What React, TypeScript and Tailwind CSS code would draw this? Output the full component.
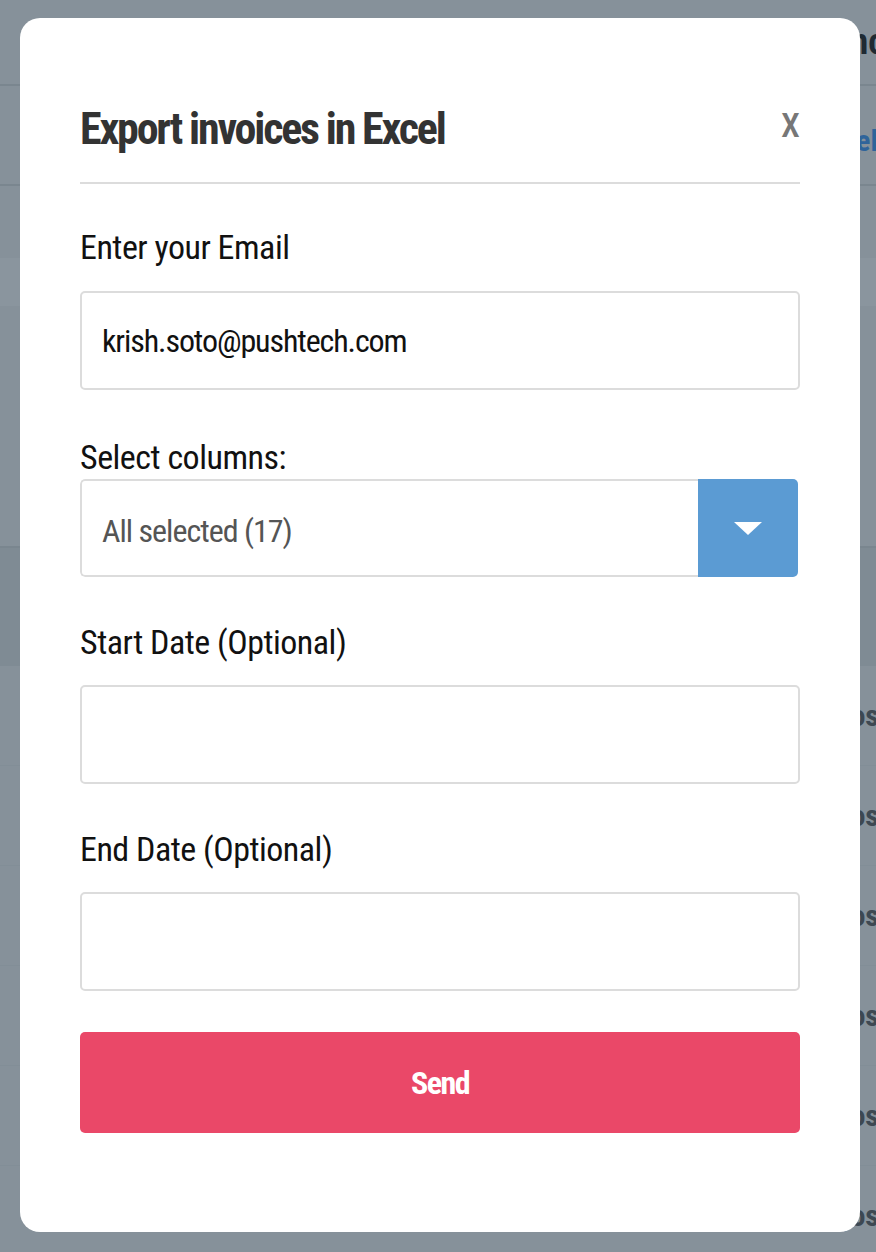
import React from "react";

const Field: React.FC<{ label: string; value?: string }> = ({ label, value }) => {
  return (
    <>
      <label className="mt-[45px] block text-[34px] leading-[40px] tracking-[-0.5px] text-[#111]">
        {label}
      </label>
      <div className="mt-[23px] flex h-[99px] w-[720px] items-center rounded-[5px] border-2 border-[#dcdcdc] px-[20px] text-[32px] text-[#111]">
        {value}
      </div>
    </>
  );
};

const App: React.FC = () => {
  return (
    <div className="relative h-[1252px] w-full overflow-hidden bg-[#86919a] font-['Roboto_Condensed','Liberation_Sans_Narrow','Arial_Narrow',Roboto,sans-serif]">
      {/* page behind the dialog */}
      <div className="flex flex-col">
        <div className="flex h-[86px] items-center justify-end border-b-2 border-[#7a868f]">
          <span className="mr-[-26px] text-[36px] font-bold text-[#1f2a33]">Finance</span>
        </div>
        <div className="flex h-[100px] items-center justify-end border-b-2 border-[#7a868f]">
          <span className="mr-[-2px] mt-[10px] text-[30px] font-bold text-[#2f649a]">Excel</span>
        </div>
        <div className="h-[72px]" />
        <div className="h-[48px] bg-[#8a959e]" />
        <div className="h-[242px] border-b-2 border-[#7a868f]" />
        <div className="h-[118px] bg-[#7f8b94]" />
        {["Pagos", "Pagos", "Pagos", "Pagos", "Pagos", "Pagos"].map((t, i) => (
          <div
            key={i}
            className="flex h-[100px] items-center justify-end border-b border-[#828e97]"
          >
            <span className="mr-[-3px] text-[30px] font-bold text-[#3d4852]">{t}</span>
          </div>
        ))}
      </div>

      {/* dialog */}
      <div className="absolute left-[20px] top-[18px] flex h-[1214px] w-[840px] flex-col rounded-[20px] bg-white px-[60px] pt-[85px]">
        <div className="flex items-start justify-between">
          <h2 className="text-[44px] font-bold leading-[52px] tracking-[-2.2px] text-[#333]">
            Export invoices in Excel
          </h2>
          <button className="mt-[2px] text-[34px] font-medium leading-[40px] text-[#777]">X</button>
        </div>
        <div className="mt-[27px] h-[2px] w-[720px] bg-[#dcdcdc]" />

        <label className="mt-[43px] block text-[34px] leading-[40px] tracking-[-0.5px] text-[#111]">
          Enter your Email
        </label>
        <div className="mt-[24px] flex h-[99px] w-[720px] items-center rounded-[5px] border-2 border-[#dcdcdc] px-[20px] text-[32px] tracking-[-1.1px] text-[#111]">
          krish.soto@pushtech.com
        </div>

        <label className="mt-[47px] block text-[34px] leading-[40px] tracking-[-0.5px] text-[#111]">
          Select columns:
        </label>
        <div className="mt-[2px] flex h-[98px] w-[718px] overflow-hidden rounded-[5px]">
          <div className="flex flex-1 items-center rounded-l-[5px] border-2 border-r-0 border-[#dcdcdc] px-[20px] pt-[6px] text-[32px] tracking-[-1px] text-[#555]">
            All selected (17)
          </div>
          <div className="flex w-[100px] items-center justify-center bg-[#5b9bd3]">
            <svg width="28" height="13" viewBox="0 0 28 13">
              <path d="M0 0 L28 0 L14 13 Z" fill="#fff" />
            </svg>
          </div>
        </div>

        <Field label="Start Date (Optional)" />
        <Field label="End Date (Optional)" />

        <button className="mt-[41px] flex h-[101px] w-[720px] items-center justify-center rounded-[5px] bg-[#ea4868] text-[32px] font-bold tracking-[-1.5px] text-white">
          Send
        </button>
      </div>
    </div>
  );
};

export default App;
